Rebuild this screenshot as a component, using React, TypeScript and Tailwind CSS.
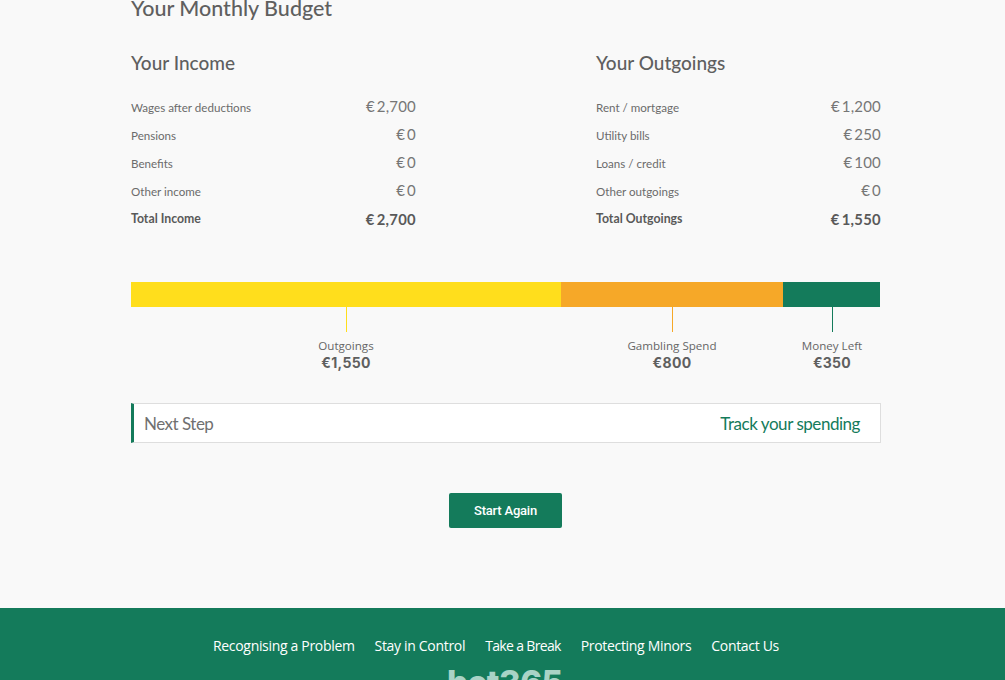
const FUTURA = "font-['Lato','Noto_Sans',sans-serif]";

function Row({ label, value, bold }: { label: string; value: string; bold?: boolean }) {
  const [sym, amount] = [value[0], value.slice(1)];
  return (
    <div className={`flex h-[28px] items-center justify-between ${bold ? "text-[#595959]" : "text-[#6b6b6b]"}`}>
      <span className={bold ? "mt-[1px] text-[12.3px] font-bold" : "mt-[1px] text-[11.6px]"}>{label}</span>
      <span className={bold ? "text-[14.8px] font-bold tracking-[0.3px]" : "mb-[1px] text-[15px] tracking-[0.2px] text-[#767676]"}>
        {sym}
        <span className="ml-[2px]">{amount}</span>
      </span>
    </div>
  );
}

function Column({ title, rows }: { title: string; rows: [string, string, boolean?][] }) {
  return (
    <div className="w-[285px]">
      <h3 className="mb-[16px] h-[28px] text-[19px] leading-[28px] font-medium text-[#5f5f5f]">{title}</h3>
      {rows.map(([l, v, b]) => (
        <Row key={l} label={l} value={v} bold={b} />
      ))}
    </div>
  );
}

function Marker({ color, label, value, width }: { color: string; label: string; value: string; width: string }) {
  return (
    <div className={`flex flex-col items-center ${width}`}>
      <div className={`h-[25px] w-px ${color}`} />
      <div className="mt-[6px] font-['Open_Sans',sans-serif] text-[11.6px] leading-[16px] whitespace-nowrap text-[#666]">{label}</div>
      <div className="font-['Inter',sans-serif] text-[14px] leading-[18px] font-bold tracking-[0.3px] text-[#5f5f5f]">{value}</div>
    </div>
  );
}

export default function App() {
  return (
    <div className={`flex h-[680px] w-full flex-col overflow-hidden bg-[#f9f9f9] ${FUTURA}`}>
      <div className="ml-[131px] w-[750px] flex-1">
        <h2 className="-mt-[6px] h-[28px] text-[21.5px] leading-[28px] font-medium text-[#5f5f5f]">Your Monthly Budget</h2>
        <div className="mt-[27px] flex justify-between">
          <Column
            title="Your Income"
            rows={[
              ["Wages after deductions", "€2,700"],
              ["Pensions", "€0"],
              ["Benefits", "€0"],
              ["Other income", "€0"],
              ["Total Income", "€2,700", true],
            ]}
          />
          <Column
            title="Your Outgoings"
            rows={[
              ["Rent / mortgage", "€1,200"],
              ["Utility bills", "€250"],
              ["Loans / credit", "€100"],
              ["Other outgoings", "€0"],
              ["Total Outgoings", "€1,550", true],
            ]}
          />
        </div>

        <div className="mt-[49px] flex h-[25px] w-[749px]">
          <div className="w-[430px] bg-[#ffde1c]" />
          <div className="w-[222px] bg-[#f6a828]" />
          <div className="flex-1 bg-[#147b5b]" />
        </div>
        <div className="flex w-[749px]">
          <Marker color="bg-[#ffde1c]" label="Outgoings" value="€1,550" width="w-[430px]" />
          <Marker color="bg-[#f6a828]" label="Gambling Spend" value="€800" width="w-[222px]" />
          <div className="flex flex-1 justify-center pl-[1px]">
            <Marker color="bg-[#147b5b]" label="Money Left" value="€350" width="" />
          </div>
        </div>

        <div className="mt-[31px] flex h-[40px] items-center justify-between border border-l-[3px] border-[#dedede] border-l-[#147b5b] bg-white pt-[2px] pr-[20px] pl-[10px] text-[17px]">
          <span className="tracking-[-0.5px] text-[#707070]">Next Step</span>
          <span className="tracking-[-0.46px] text-[#147b5b]">Track your spending</span>
        </div>

        <div className="mt-[50px] flex w-[749px] justify-center">
          <button className="h-[35px] w-[113px] rounded-[2px] bg-[#147b5b] font-['Roboto',sans-serif] text-[13px] font-medium tracking-[-0.2px] text-white">
            Start Again
          </button>
        </div>
      </div>

      <footer className="h-[72px] shrink-0 overflow-hidden bg-[#147b5b]">
        <nav className="ml-[213px] flex gap-[20px] pt-[28px] font-['Open_Sans',sans-serif] text-[14px] leading-[20px] tracking-[-0.32px] whitespace-nowrap text-white">
          <span>Recognising a Problem</span>
          <span>Stay in Control</span>
          <span className="tracking-[-0.66px]">Take a Break</span>
          <span>Protecting Minors</span>
          <span>Contact Us</span>
        </nav>
        <div className="mt-[7px] ml-[447px] font-['Inter',sans-serif] text-[33px] leading-[38px] font-extrabold tracking-[-0.5px] text-[#a9d3c6]">
          bet365
        </div>
      </footer>
    </div>
  );
}
